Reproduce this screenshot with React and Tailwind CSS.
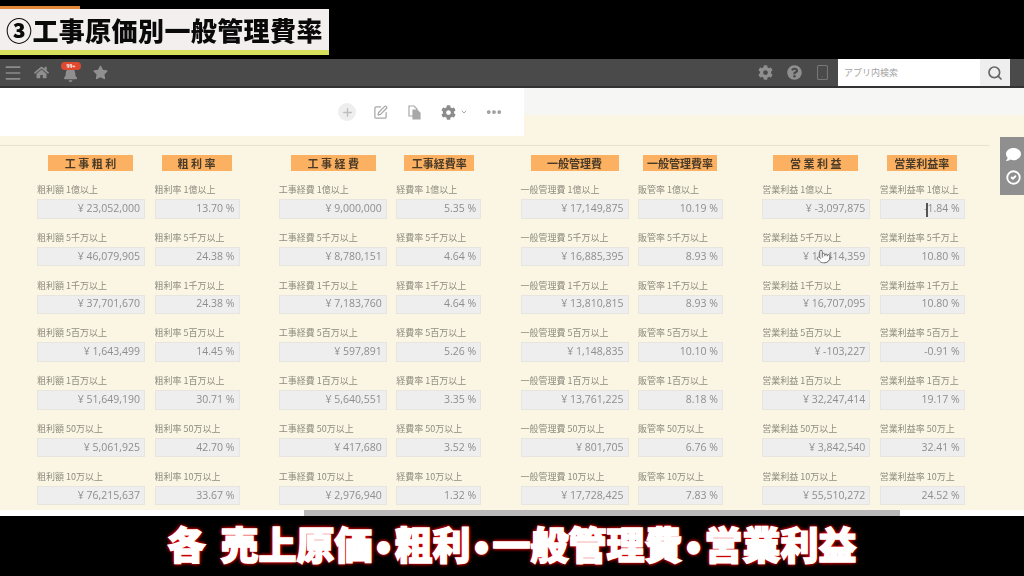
import React from "react";
import { Menu, Smartphone, Search, Plus, SquarePen, Ellipsis, ChevronDown, CircleCheck, Pointer } from "lucide-react";
import { FaCog, FaQuestionCircle, FaHome, FaBell, FaStar, FaComment } from "react-icons/fa";

const S1 = ["1億以上", "5千万以上", "1千万以上", "5百万以上", "1百万以上", "50万以上", "10万以上"];
const S2 = ["1億以上", "5千万上", "1千万上", "5百万上", "1百万上", "50万上", "10万上"];

const groups = [
  [
    { h: "工 事 粗 利", hw: "w-[85px] ml-[11px]", l: "粗利額", s: S1, y: true, v: ["23,052,000", "46,079,905", "37,701,670", "1,643,499", "51,649,190", "5,061,925", "76,215,637"] },
    { h: "粗 利 率", hw: "w-[70px] ml-[7px]", l: "粗利率", s: S1, v: ["13.70", "24.38", "24.38", "14.45", "30.71", "42.70", "33.67"] },
  ],
  [
    { h: "工 事 経 費", hw: "w-[85px] ml-[12px]", l: "工事経費", s: S1, y: true, v: ["9,000,000", "8,780,151", "7,183,760", "597,891", "5,640,551", "417,680", "2,976,940"] },
    { h: "工事経費率", hw: "w-[70px] ml-[8px]", l: "経費率", s: S1, v: ["5.35", "4.64", "4.64", "5.26", "3.35", "3.52", "1.32"] },
  ],
  [
    { h: "一般管理費", hw: "w-[88px] ml-[10px]", l: "一般管理費", s: S1, y: true, v: ["17,149,875", "16,885,395", "13,810,815", "1,148,835", "13,761,225", "801,705", "17,728,425"] },
    { h: "一般管理費率", hw: "w-[74px] ml-[5px]", l: "販管率", s: S1, v: ["10.19", "8.93", "8.93", "10.10", "8.18", "6.76", "7.83"] },
  ],
  [
    { h: "営 業 利 益", hw: "w-[85px] ml-[11px]", l: "営業利益", s: S1, y: true, v: ["-3,097,875", "15,414,359", "16,707,095", "-103,227", "32,247,414", "3,842,540", "55,510,272"] },
    { h: "営業利益率", hw: "w-[70px] ml-[7px]", l: "営業利益率", s: S2, v: ["-1.84", "10.80", "10.80", "-0.91", "19.17", "32.41", "24.52"] },
  ],
];

const jp = "font-['Noto_Sans_CJK_JP','Noto_Sans',sans-serif]";

function Dot() {
  return <span className="inline-block w-[22px] text-center text-[38px] overflow-visible">•</span>;
}

function Column({ c }) {
  return (
    <div className={c.y ? "w-[108px]" : "w-[85px]"}>
      <div className={`${c.hw} h-[16px] mb-[10px] bg-[#fbb161] flex items-center justify-center text-[11px] leading-none font-bold text-[#4a3a28] whitespace-nowrap`}>
        {c.h}
      </div>
      {c.v.map((v, i) => (
        <div key={i} className="h-[47.8px]">
          <div className="h-[18px] text-[9px] leading-[17px] text-[#8d8d80] whitespace-nowrap">
            {c.l} {c.s[i]}
          </div>
          <div className="h-[19.5px] bg-[#eeeeee] border border-[#e6e5df] flex items-center justify-end pr-[4px] text-[10.5px] text-[#8e8e8e] font-['Open_Sans','Noto_Sans',sans-serif] whitespace-nowrap">
            {c.y ? `¥ ${v}` : `${v} %`}
          </div>
        </div>
      ))}
    </div>
  );
}

export default function App() {
  return (
    <div className={`relative w-[1024px] h-[576px] overflow-hidden bg-black flex flex-col ${jp}`}>
      {/* Title strip */}
      <div className="h-[59px] shrink-0 bg-black pt-[6px]">
        <div className="w-[329px] h-[49px] relative flex flex-col">
          <div className="h-[3px] w-[80px] bg-[#e58a3a]" />
          <div className="flex-1 bg-[#f3efef] flex items-center pl-[6px] text-[26px] leading-none font-black text-[#0a0a0a] whitespace-nowrap tracking-[0.4px] blur-[0.4px]">
            ③工事原価別一般管理費率
          </div>
          <div className="h-[5px] bg-[#d6e05a]" />
        </div>
      </div>

      {/* App bar */}
      <div className="h-[29px] shrink-0 bg-[#4a4a4a] border-b-2 border-[#333] flex items-center text-[#8c8c8c]">
        <Menu size={20} strokeWidth={2} className="ml-[3px]" />
        <FaHome size={15} className="ml-[11px] text-[#8f8f8f]" />
        <div className="relative ml-[13px] w-[18px] h-[20px]">
          <FaBell size={15} className="absolute left-[1px] top-[4px] text-[#8f8f8f]" />
          <div className="absolute left-[-1px] top-[-1px] w-[20px] h-[8px] rounded-full bg-[#e0492f] text-white text-[5px] leading-[8px] text-center font-bold">99+</div>
        </div>
        <FaStar size={15} className="ml-[13px] text-[#8f8f8f]" />
        <div className="flex-1" />
        <FaCog size={15} className="mr-[14px] text-[#8f8f8f]" />
        <FaQuestionCircle size={15} className="mr-[12px] text-[#8f8f8f]" />
        <Smartphone size={17} strokeWidth={1.5} className="mr-[7px] text-[#777]" />
        <div className="w-[142px] h-[27px] bg-white flex items-center pl-[6px] text-[9px] text-[#a3a3a3]">アプリ内検索</div>
        <div className="w-[30px] h-[27px] bg-[#eeeeee] flex items-center justify-center text-[#666]">
          <Search size={16} strokeWidth={2.5} />
        </div>
        <div className="w-[14px]" />
      </div>

      {/* Page */}
      <div className="relative flex-1 min-h-0 bg-[#fbf5e3] flex flex-col overflow-hidden">
        <div className="h-[48px] shrink-0 flex">
          <div className="w-[524px] h-full bg-white flex items-center text-[#a8a8a8]">
            <div className="ml-[338px] w-[18px] h-[18px] rounded-full bg-[#eeeeee] flex items-center justify-center text-[#bdbdbd]">
              <Plus size={13} strokeWidth={2.5} />
            </div>
            <SquarePen size={15} strokeWidth={2} className="ml-[17px]" />
            <svg width="15" height="15" viewBox="0 0 15 15" className="ml-[19px]" fill="none" stroke="#a8a8a8" strokeWidth="1.2">
              <path d="M2 1 H7 L10 4 V11 H2 Z" />
              <path d="M6 5 H10 L13 8 V14 H6 Z" fill="#a8a8a8" />
            </svg>
            <FaCog size={15} className="ml-[19px] text-[#8c8c8c]" />
            <ChevronDown size={8} strokeWidth={3} className="ml-[4px]" />
            <Ellipsis size={18} strokeWidth={3} className="ml-[17px] text-[#999]" />
          </div>
          <div className="flex-1 h-[27px] bg-[#f6f6f4]" />
        </div>
        <div className="w-[990px] h-[10px] shrink-0 border-b border-[#e9e2cf] -mb-px" />
        <div className="flex-1 min-h-0 pt-[10px] pl-[37px] flex gap-[39.25px] blur-[0.35px]">
          {groups.map((g, i) => (
            <div key={i} className="flex gap-[9.5px]">
              {g.map((c, j) => <Column key={j} c={c} />)}
            </div>
          ))}
        </div>

        {/* Scrollbar */}
        <div className="h-[6px] shrink-0 bg-white flex">
          <div className="ml-[304px] w-[596px] h-full bg-[#b9b9b9]" />
        </div>

        {/* Side tab */}
        <div className="absolute right-0 top-[49px] w-[24px] h-[58px] bg-[#8f8f8f] flex flex-col items-center justify-center gap-[8px] pl-[3px] text-white">
          <FaComment size={15} />
          <CircleCheck size={15} strokeWidth={3} />
        </div>

        {/* Cursors */}
        <div className="absolute left-[926px] top-[115px] w-[2px] h-[14px] bg-[#555]" />
        <Pointer size={15} strokeWidth={1.5} fill="white" className="absolute left-[816px] top-[161px] text-[#666]" />
      </div>

      {/* Caption */}
      <div className="h-[60px] shrink-0 bg-black flex items-center justify-center pb-[6px]">
        <div className="text-[38px] leading-none font-black text-white whitespace-nowrap [-webkit-text-stroke:1.5px_white] [text-shadow:0_0_2px_#f00000,0_0_3px_#f00000,0_0_4px_#f00000,0_0_4px_#f00000]">
          各<span className="inline-block w-[15px]"></span>売上原価<Dot />粗利<Dot />一般管理費<Dot />営業利益
        </div>
      </div>
    </div>
  );
}
